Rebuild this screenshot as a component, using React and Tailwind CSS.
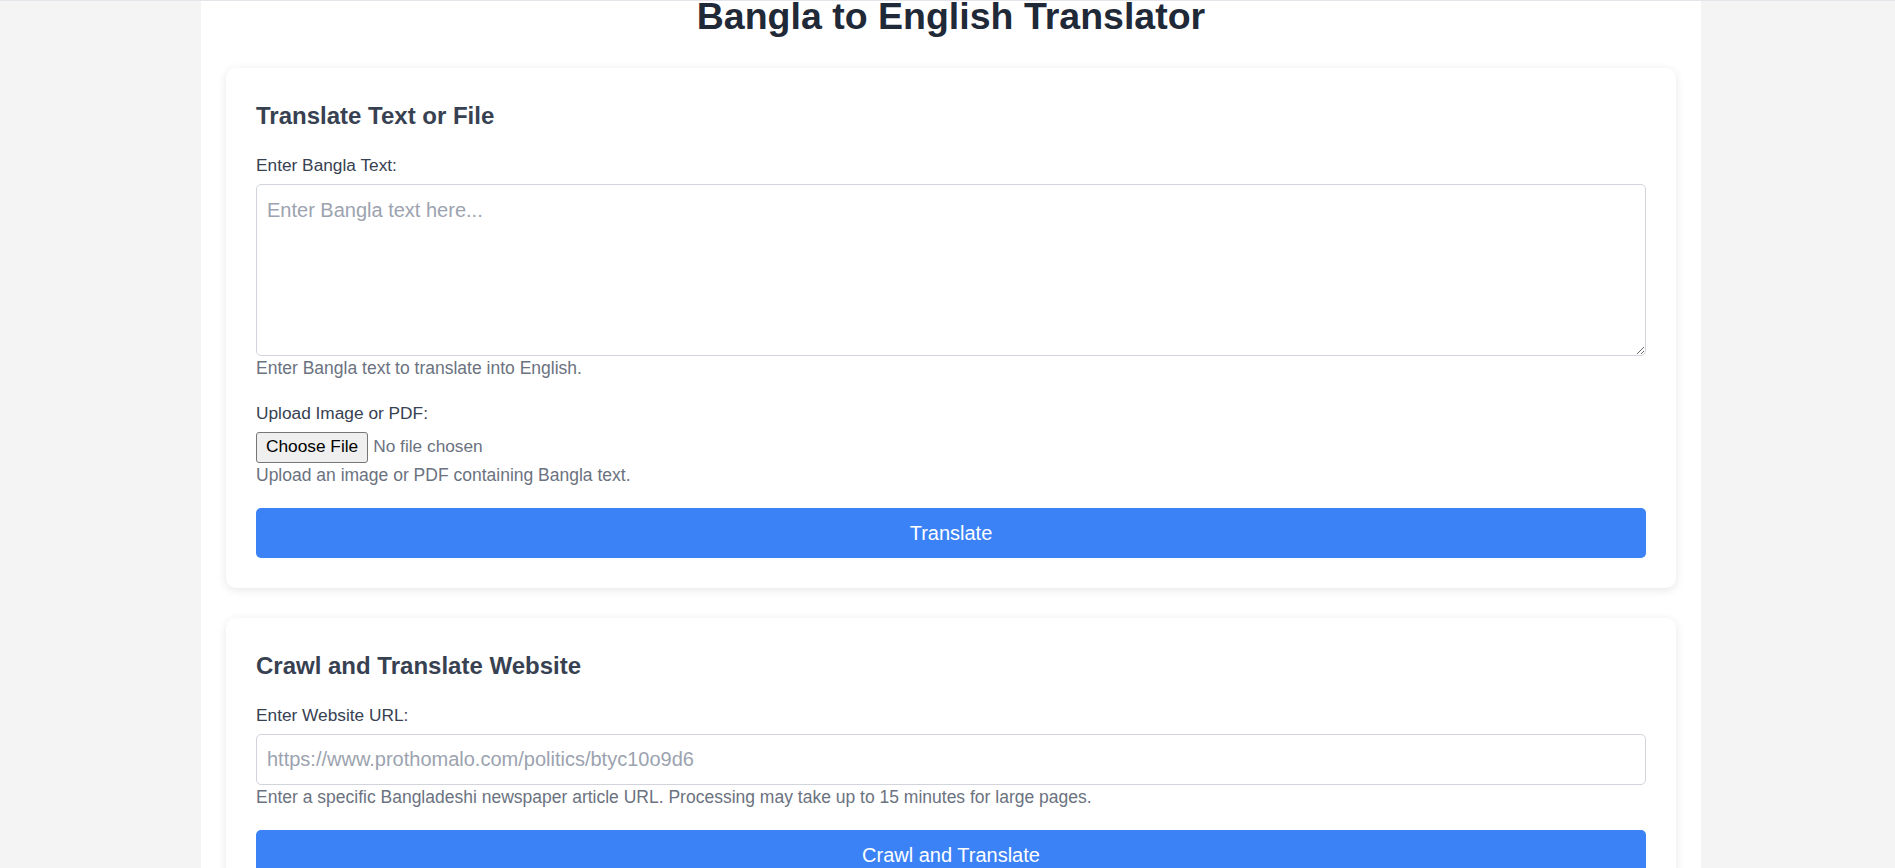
import React, { useState } from 'react';

const FormGroup = ({ label, hint, children }) => (
  <div className="mb-5">
    <label className="block mb-[5px] text-[17.3px] text-[#374151]">{label}</label>
    {children}
    <p className="text-[17.5px] leading-[25px] text-[#6b7280]">{hint}</p>
  </div>
);

const Card = ({ title, children }) => (
  <div className="bg-white rounded-[10px] shadow-[0_2px_10px_rgba(0,0,0,0.1)] p-[30px] mb-[30px]">
    <h2 className="text-[24px] leading-[36px] font-bold text-[#374151] mb-[19px]">{title}</h2>
    {children}
  </div>
);

const App = () => {
  const [text, setText] = useState('');
  const [url, setUrl] = useState('');

  return (
    <div className="min-h-screen bg-[#f4f4f4] border-t border-[#e4e4ea] font-['Liberation_Sans',Arial,sans-serif] flex justify-center pl-[7px]">
      <div className="w-[1500px] bg-white px-[25px]">
        <h1 className="text-center text-[37.5px] leading-[31px] font-bold text-[#1f2937]">
          Bangla to English Translator
        </h1>

        <div className="mt-[36px]">
          <Card title="Translate Text or File">
            <FormGroup label="Enter Bangla Text:" hint="Enter Bangla text to translate into English.">
              <textarea
                value={text}
                onChange={(e) => setText(e.target.value)}
                placeholder="Enter Bangla text here..."
                className="block w-full h-[172px] p-[10px] text-[20px] border border-[#d1d5db] rounded-[5px] placeholder:text-[#9ca3af] outline-none"
              />
            </FormGroup>

            <FormGroup label="Upload Image or PDF:" hint="Upload an image or PDF containing Bangla text.">
              <div className="flex items-center h-[31px] text-[17.3px]">
                <span className="h-[31px] flex items-center px-[9px] bg-[#efefef] border border-[#767676] rounded-[3px] text-black">
                  Choose File
                </span>
                <span className="ml-[5px] text-[#6b7280]">No file chosen</span>
              </div>
            </FormGroup>

            <button className="w-full h-[50px] bg-[#3b82f6] text-white text-[20px] rounded-[5px]">
              Translate
            </button>
          </Card>

          <Card title="Crawl and Translate Website">
            <FormGroup
              label="Enter Website URL:"
              hint="Enter a specific Bangladeshi newspaper article URL. Processing may take up to 15 minutes for large pages."
            >
              <input
                type="text"
                value={url}
                onChange={(e) => setUrl(e.target.value)}
                placeholder="https://www.prothomalo.com/politics/btyc10o9d6"
                className="block w-full h-[51px] px-[10px] text-[20px] border border-[#d1d5db] rounded-[5px] placeholder:text-[#9ca3af] outline-none"
              />
            </FormGroup>

            <button className="w-full h-[50px] bg-[#3b82f6] text-white text-[20px] rounded-[5px]">
              Crawl and Translate
            </button>
          </Card>
        </div>
      </div>
    </div>
  );
};

export default App;
